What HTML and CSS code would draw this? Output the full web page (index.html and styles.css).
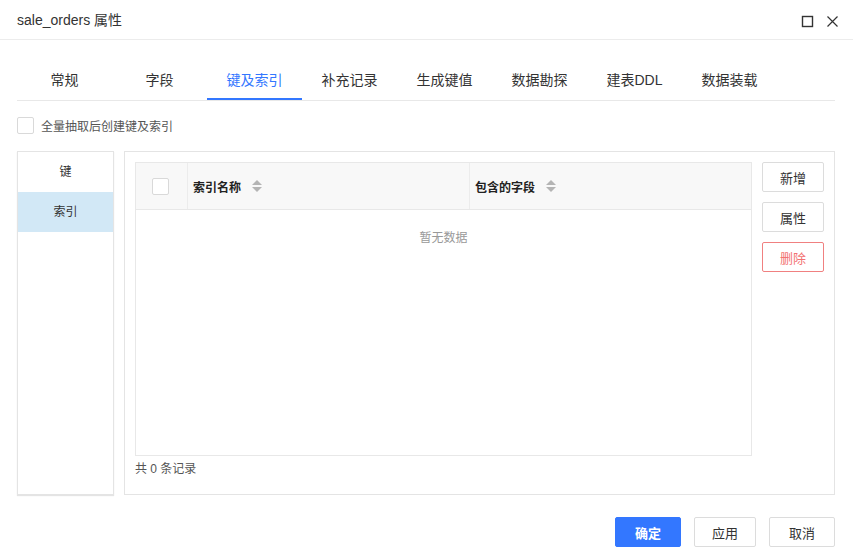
FILE: index.html
```html
<!DOCTYPE html>
<html lang="zh-CN">
<head>
    <meta charset="UTF-8">
    <meta name="viewport" content="width=device-width, initial-scale=1.0">
    <title>sale_orders 属性</title>
    <link rel="stylesheet" href="styles.css">
</head>
<body>
    <div class="dialog">
        <div class="dialog-header">
            <span class="dialog-title">sale_orders 属性</span>
            <div class="dialog-tools">
                <svg class="tool-icon" width="13" height="13" viewBox="0 0 13 13">
                    <rect x="1.5" y="1.5" width="10" height="10" fill="none" stroke="#333" stroke-width="1.4"/>
                </svg>
                <svg class="tool-icon" width="13" height="13" viewBox="0 0 13 13">
                    <path d="M1.5 1.5 L11.5 11.5 M11.5 1.5 L1.5 11.5" stroke="#333" stroke-width="1.2"/>
                </svg>
            </div>
        </div>

        <div class="dialog-body">
            <div class="tabs">
                <div class="tab">常规</div>
                <div class="tab">字段</div>
                <div class="tab active">键及索引</div>
                <div class="tab">补充记录</div>
                <div class="tab">生成键值</div>
                <div class="tab">数据勘探</div>
                <div class="tab">建表DDL</div>
                <div class="tab">数据装载</div>
            </div>

            <label class="check-row">
                <span class="checkbox"></span>
                <span>全量抽取后创建键及索引</span>
            </label>

            <div class="main">
                <div class="side-list">
                    <div class="side-item">键</div>
                    <div class="side-item selected">索引</div>
                </div>

                <div class="panel">
                    <div class="table-area">
                        <div class="grid">
                            <div class="grid-head">
                                <div class="cell cell-check"><span class="checkbox"></span></div>
                                <div class="cell">索引名称 <span class="sorter"></span></div>
                                <div class="cell">包含的字段 <span class="sorter"></span></div>
                            </div>
                            <div class="grid-empty">暂无数据</div>
                        </div>
                        <div class="grid-footer">共 0 条记录</div>
                    </div>
                    <div class="side-buttons">
                        <button class="btn">新增</button>
                        <button class="btn">属性</button>
                        <button class="btn btn-danger">删除</button>
                    </div>
                </div>
            </div>
        </div>

        <div class="dialog-footer">
            <button class="btn btn-primary">确定</button>
            <button class="btn btn-apply">应用</button>
            <button class="btn">取消</button>
        </div>
    </div>
</body>
</html>
```

FILE: styles.css
```css
body {
    margin: 0;
    background: #fff;
    font-family: "Liberation Sans", "Noto Sans CJK SC", sans-serif;
    color: #333;
}

.dialog {
    width: 853px;
    height: 552px;
    box-sizing: border-box;
}

.dialog-header {
    height: 40px;
    border-bottom: 1px solid #ececec;
    display: flex;
    align-items: center;
    justify-content: space-between;
    padding: 0 14px 0 17px;
    box-sizing: border-box;
}

.dialog-title {
    font-size: 14px;
    color: #333;
    margin-top: -2px;
}

.dialog-tools {
    display: flex;
    gap: 12px;
    margin-top: 4px;
}

.tool-icon {
    display: block;
}

.dialog-body {
    padding: 0 18px 0 17px;
}

.tabs {
    display: flex;
    margin-top: 20px;
    border-bottom: 1px solid #e8e8e8;
}

.tab {
    width: 95px;
    height: 40px;
    line-height: 40px;
    text-align: center;
    font-size: 14px;
    color: #333;
    box-sizing: border-box;
}

.tab.active {
    color: #3377ff;
    border-bottom: 2px solid #3377ff;
    margin-bottom: -1px;
}

.check-row {
    display: flex;
    align-items: center;
    gap: 7px;
    margin-top: 16px;
    font-size: 12px;
    color: #555;
    height: 17px;
}

.checkbox {
    display: inline-block;
    width: 15px;
    height: 15px;
    border: 1px solid #d9d9d9;
    border-radius: 2px;
    background: #fff;
}

.main {
    display: flex;
    gap: 10px;
    margin-top: 17px;
    height: 344px;
}

.side-list {
    width: 97px;
    box-sizing: border-box;
    border: 1px solid #e4e4e4;
    box-shadow: 0 1px 1px #e4e4e4;
}

.side-item {
    height: 40px;
    line-height: 40px;
    text-align: center;
    font-size: 12px;
    color: #333;
}

.side-item.selected {
    background: #d2e8f6;
}

.panel {
    flex: 1;
    border: 1px solid #e4e4e4;
    display: flex;
    gap: 10px;
    padding: 10px 10px 10px 10px;
}

.table-area {
    flex: 1;
    display: flex;
    flex-direction: column;
}

.grid {
    flex: 1;
    border: 1px solid #e8e8e8;
}

.grid-head {
    display: grid;
    grid-template-columns: 51px 1fr 1fr;
    height: 46px;
    background: #f8f8f8;
    border-bottom: 1px solid #e8e8e8;
}

.cell {
    display: flex;
    align-items: center;
    padding-left: 5px;
    font-size: 12px;
    font-weight: bold;
    color: #222;
    border-left: 1px solid #ececec;
}

.cell-check {
    border-left: none;
    padding-left: 16px;
}

.sorter {
    display: inline-block;
    position: relative;
    width: 10px;
    height: 12px;
    margin-left: 11px;
}

.sorter::before,
.sorter::after {
    content: "";
    position: absolute;
    left: 0;
    border-left: 5px solid transparent;
    border-right: 5px solid transparent;
}

.sorter::before {
    top: 0;
    border-bottom: 5px solid #b4b4b4;
}

.sorter::after {
    bottom: 0;
    border-top: 5px solid #b4b4b4;
}

.grid-empty {
    text-align: center;
    font-size: 12px;
    color: #999;
    padding-top: 18px;
}

.grid-footer {
    height: 28px;
    line-height: 26px;
    font-size: 12px;
    color: #555;
}

.side-buttons {
    display: flex;
    flex-direction: column;
    gap: 10px;
}

.btn {
    width: 62px;
    height: 30px;
    border: 1px solid #dcdcdc;
    border-radius: 2px;
    background: #fff;
    font-family: inherit;
    font-size: 13px;
    color: #333;
    padding: 0;
}

.btn-danger {
    border-color: #f08080;
    color: #f37272;
}

.dialog-footer {
    display: flex;
    justify-content: flex-end;
    gap: 13px;
    padding: 22px 18px 0 0;
}

.dialog-footer .btn {
    width: 66px;
}

.dialog-footer .btn-apply {
    width: 62px;
}

.btn-primary {
    background: #3377ff;
    border-color: #3377ff;
    color: #fff;
    font-weight: bold;
}
```
